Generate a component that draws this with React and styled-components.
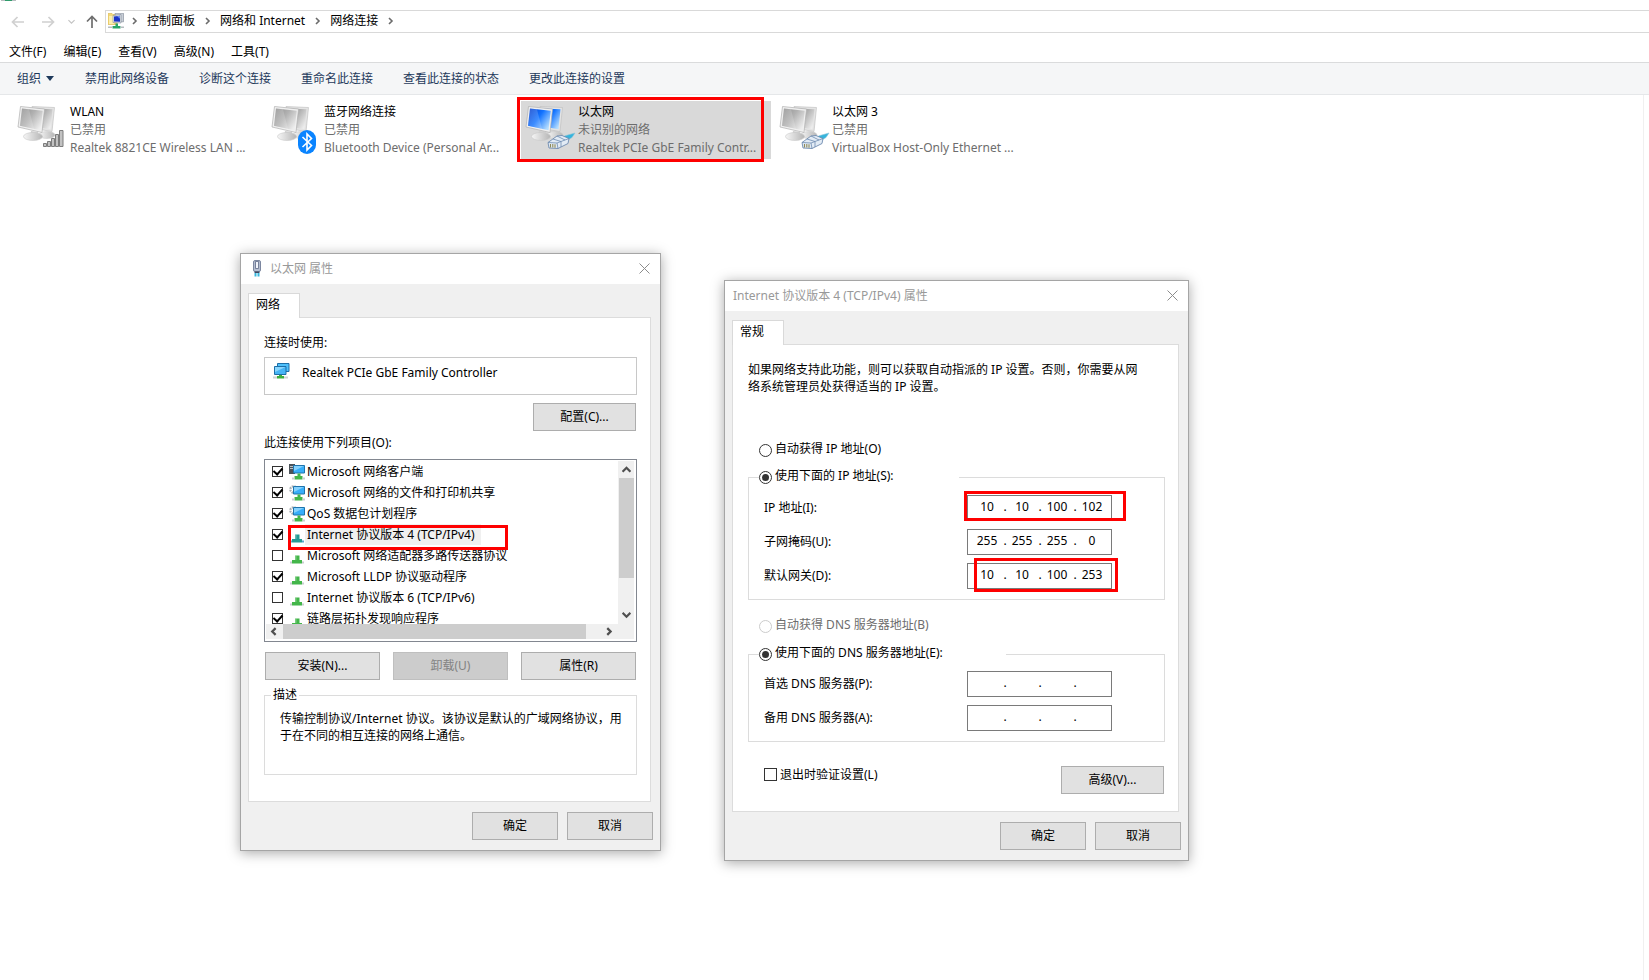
import React, { useState } from "react";
import styled, { createGlobalStyle, css } from "styled-components";

const GlobalStyle = createGlobalStyle`
  * {
    box-sizing: border-box;
  }

  body {
    margin: 0;
    background: #fff;
    color: #000;
    font-family: "Noto Sans", "Noto Sans CJK SC", sans-serif;
    font-size: 12px;
    line-height: 16px;
  }

  button, input {
    font: inherit;
    color: inherit;
  }
`;

const crumbs = ["控制面板", "网络和 Internet", "网络连接"];

const menus = ["文件(F)", "编辑(E)", "查看(V)", "高级(N)", "工具(T)"];

const commands = [
  "禁用此网络设备",
  "诊断这个连接",
  "重命名此连接",
  "查看此连接的状态",
  "更改此连接的设置",
];

const connections = [
  { name: "WLAN", status: "已禁用", device: "Realtek 8821CE Wireless LAN ...", badge: "signal" },
  { name: "蓝牙网络连接", status: "已禁用", device: "Bluetooth Device (Personal Ar...", badge: "bluetooth" },
  { name: "以太网", status: "未识别的网络", device: "Realtek PCIe GbE Family Contr...", badge: "cable", active: true },
  { name: "以太网 3", status: "已禁用", device: "VirtualBox Host-Only Ethernet ...", badge: "cable" },
];

const components = [
  { name: "Microsoft 网络客户端", icon: "client", on: true },
  { name: "Microsoft 网络的文件和打印机共享", icon: "service", on: true },
  { name: "QoS 数据包计划程序", icon: "service", on: true },
  { name: "Internet 协议版本 4 (TCP/IPv4)", icon: "protocol", on: true, selected: true },
  { name: "Microsoft 网络适配器多路传送器协议", icon: "protocol", on: false },
  { name: "Microsoft LLDP 协议驱动程序", icon: "protocol", on: true },
  { name: "Internet 协议版本 6 (TCP/IPv6)", icon: "protocol", on: false },
  { name: "链路层拓扑发现响应程序", icon: "protocol", on: true },
];

/* ---------- icons ---------- */

const Chevron = ({ dir = "right", size = 7, color = "#6b6b6b", width = 1.4 }) => {
  const paths = {
    right: "M2 1 L5 4 L2 7",
    left: "M5 1 L2 4 L5 7",
    up: "M0.5 6 L4 2.5 L7.5 6",
    down: "M0.5 2.5 L4 6 L7.5 2.5",
  };
  return (
    <svg width={size} height={size} viewBox="0 0 8 8" fill="none" stroke={color} strokeWidth={width}>
      <path d={paths[dir]} />
    </svg>
  );
};

const Arrow = ({ dir, color }) => {
  const turn = { left: 0, up: 90, right: 180 }[dir];
  return (
    <svg width="14" height="14" viewBox="0 0 14 14" fill="none" stroke={color} strokeWidth="1.7">
      <path d="M13 7H2M6.5 2L1.5 7l5 5" transform={`rotate(${turn} 7 7)`} />
    </svg>
  );
};

const FolderIcon = () => (
  <svg width="16" height="16" viewBox="0 0 16 16">
    <path d="M0 0.5h4l1 1h4v10H0z" fill="#f2d87a" stroke="#d9b64a" strokeWidth="0.6" />
    <path d="M1 3h5v8H1z" fill="#fbeeb0" />
    <path d="M7 0.3h8.500v8.500H8z" fill="#c9cfd8" stroke="#7d8794" strokeWidth="0.6" />
    <path d="M5 2.500l8-1v8.500l-8-0.5z" fill="#e2e6ec" stroke="#7d8794" strokeWidth="0.6" />
    <path d="M6 3.500l6-0.8v6.100l-6-0.4z" fill="#1b34c9" />
    <path d="M9 3.200l3-0.4v3z" fill="#6c8df2" />
    <path d="M7.500 10.500h2.500v2.500h2.500v2.500H4.500v-2.500h3z" fill="#27a567" />
    <path d="M0 13.500h4.500v1.500H0zM12.500 13.500h3.500v1.500h-3.500z" fill="#b5bcc0" />
  </svg>
);

const badges = {
  signal: (
    <g fill="#c2c2c2" stroke="#7d7d7d" strokeWidth="1">
      <path d="M27.500 38.500h3v3h-3zM31.500 36.500h3v5h-3zM35.500 33.500h3v8h-3zM39.500 29.500h3v12h-3zM43.500 25.500h3.500v16h-3.500z" />
    </g>
  ),
  bluetooth: (
    <g>
      <rect x="28" y="25" width="18" height="24" rx="9" fill="#0a84ff" />
      <path d="M32.500 32l9 8.500-4.500 4.500V29l4.500 4.500-9 8.500" fill="none" stroke="#fff" strokeWidth="1.6" />
    </g>
  ),
  cable: (
    <g strokeLinejoin="round">
      <path d="M36 33l6-2.500 9-2.500-3 4.500-5 3z" fill="#35b4dc" stroke="#8cc4d8" strokeWidth="0.6" />
      <path d="M24 37.500l9-6.500 5-0.500 7 3-1 5-10 5-9-0.500z" fill="#e2ebf5" stroke="#6f8bb0" strokeWidth="0.9" />
      <path d="M24 37.500l9 0.500 12-4.500M33 38l1 5.500M29 34l8 2.500M33 31l8 4M37 36.500v5.500" fill="none" stroke="#6f8bb0" strokeWidth="0.8" />
      <path d="M26.500 39v3.500M28.800 39v3.500M31 39.200v3.500" stroke="#8f8a58" strokeWidth="1.1" />
    </g>
  ),
};

const ConnectionIcon = ({ active, badge }) => {
  const [dark, mid, light] = active ? ["#0037c8", "#1273ff", "#b4ddff"] : ["#8a8a8a", "#b2b2b2", "#ededed"];
  const id = `screen-${active ? "blue" : "gray"}-${badge}`;
  return (
    <svg width="52" height="52" viewBox="0 0 52 52">
      <defs>
        <linearGradient id={id} x1="0" y1="0" x2="1" y2="0.7">
          <stop offset="0" stopColor={dark} />
          <stop offset="0.5" stopColor={mid} />
          <stop offset="1" stopColor={light} />
        </linearGradient>
        <linearGradient id={`${id}-base`} x1="0" y1="0" x2="1" y2="0">
          <stop offset="0" stopColor="#f6f6f6" />
          <stop offset="1" stopColor="#b5b5b5" />
        </linearGradient>
      </defs>
      <ellipse cx="31" cy="30" rx="8" ry="3.500" fill={`url(#${id}-base)`} stroke="#ccc" strokeWidth="0.6" />
      <path d="M16 1.500l22.500 1-2.500 24-18-3z" fill="#e4e4e4" stroke="#bcbcbc" strokeWidth="0.6" />
      <path d="M18 3.500l18.500 0.800-2 20-14.500-2.500z" fill={`url(#${id})`} />
      <path d="M15 26l-1 6 9 0-1-5z" fill="#cfcfcf" />
      <ellipse cx="17" cy="31.500" rx="9.500" ry="4" fill={`url(#${id}-base)`} stroke="#cacaca" strokeWidth="0.6" />
      <path d="M4.500 1.500l24 2.500-2.500 23.500-24-5.500z" fill="#f0f0f0" stroke="#b0b0b0" strokeWidth="0.7" />
      <path d="M6 3.500l20.800 2.200-2.300 19.600-20.500-4.600z" fill={`url(#${id})`} />
      <path d="M6 3.500l7 0.700 5 19.600-14-3.200z" fill="#fff" opacity="0.18" />
      {badges[badge]}
    </svg>
  );
};

const PlugIcon = () => (
  <svg width="10" height="17" viewBox="0 0 10 17">
    <rect x="1.500" y="0.500" width="7" height="11" rx="1.500" fill="#b4bdd0" stroke="#7c87a0" />
    <path d="M3.500 1.500h3v7h-3z" fill="#f1f4fa" stroke="#5e6a86" strokeWidth="0.8" />
    <path d="M2.500 11.500h5v1.500h-5z" fill="#3c4660" />
    <path d="M2.500 13h2v3.500h-2zM5.500 13h2v3.500h-2z" fill="#38b6dc" />
  </svg>
);

const AdapterIcon = () => (
  <svg width="17" height="16" viewBox="0 0 17 16">
    <path d="M4.500 0.500h11.500v8H4.500z" fill="#4ec0fb" stroke="#1d6fa8" />
    <path d="M1.500 3.500h11.500v8H1.500z" fill="#46b4f6" stroke="#1d6fa8" />
    <path d="M2 4h10.500L2 9z" fill="#8ad6fd" />
    <path d="M6 12h3v1h2v2.500H4V13h2z" fill="#3dae3f" />
    <path d="M0 13.500h4v2H0zM11 13.500h4v2h-4z" fill="#cfd2d4" />
  </svg>
);

const ComponentIcon = ({ kind, selected }) => {
  const green = selected ? "#249a94" : "#43b64a";
  if (kind === "protocol") {
    return (
      <svg width="16" height="16" viewBox="0 0 16 16">
        <path d="M6 7.500h4.500V12H13v3.500H3V12h3z" fill={green} />
        <path d="M1 13.500h2v2H1zM13 13.500h2v2h-2z" fill={selected ? "#5aa5cf" : "#c9cdd0"} />
        <path d="M6 7.500h1.500V12H6z" fill="#fff" opacity="0.3" />
      </svg>
    );
  }
  return (
    <svg width="16" height="16" viewBox="0 0 16 16">
      {kind === "client" ? (
        <g>
          <path d="M0 0h6v10H0z" fill="#4b5258" />
          <path d="M1 2h3v1H1zM1 4h3v1H1z" fill="#b8c0c6" />
        </g>
      ) : (
        <circle cx="4.500" cy="4.500" r="3.200" fill="none" stroke="#a6adb2" strokeWidth="2.200" strokeDasharray="1.700 0.900" />
      )}
      <path d="M4.500 1.500h11v7.500h-11z" fill="#37aefa" stroke="#1f74ad" />
      <path d="M5 2h10L5 7z" fill="#86d2fd" />
      <path d="M8.500 9.500h3V12h2v3.500h-8V12h3z" fill="#43b64a" />
      <path d="M3 13.500h2.500v2H3zM13.500 13.500H16v2h-2.500z" fill="#c9cdd0" />
    </svg>
  );
};

const CloseIcon = () => (
  <svg width="11" height="11" viewBox="0 0 11 11" stroke="#8c8c8c" strokeWidth="1">
    <path d="M0.500 0.500l10 10M10.500 0.500l-10 10" />
  </svg>
);

/* ---------- parts ---------- */

const Explorer = ({ children }) => (
  <Page>
    <AddressRow>
      <NavButtons>
        <NavButton aria-label="后退" disabled><Arrow dir="left" color="#d0d0d0" /></NavButton>
        <NavButton aria-label="前进" disabled><Arrow dir="right" color="#d0d0d0" /></NavButton>
        <NavButton aria-label="最近" $small disabled><Chevron dir="down" color="#c4c4c4" /></NavButton>
        <NavButton aria-label="向上"><Arrow dir="up" color="#6e6e6e" /></NavButton>
      </NavButtons>
      <AddressBar aria-label="地址">
        <FolderIcon />
        {crumbs.map((crumb) => (
          <Crumb key={crumb}>
            <Chevron size={8} width={1.6} />
            <a href="#">{crumb}</a>
          </Crumb>
        ))}
        <Crumb><Chevron size={8} width={1.6} /></Crumb>
      </AddressBar>
    </AddressRow>
    <MenuBar>
      {menus.map((menu) => <MenuButton key={menu}>{menu}</MenuButton>)}
    </MenuBar>
    <CommandBar>
      <Command>组织 <Caret /></Command>
      {commands.map((command) => <Command key={command}>{command}</Command>)}
    </CommandBar>
    <Desktop>
      <Connections>
        {connections.map(({ name, status, device, badge, active }) => (
          <Connection key={name} $active={active}>
            <ConnectionIcon active={active} badge={badge} />
            <ConnectionText>
              <strong>{name}</strong>
              <span>{status}</span>
              <span>{device}</span>
            </ConnectionText>
            {active && <TileMark />}
          </Connection>
        ))}
      </Connections>
    </Desktop>
    {children}
  </Page>
);

const Dialog = ({ place, title, icon, tab, children }) => (
  <Window $place={place} role="dialog" aria-label={title}>
    <TitleBar $icon={icon}>
      {icon}
      <h2>{title}</h2>
      <CloseButton aria-label="关闭"><CloseIcon /></CloseButton>
    </TitleBar>
    <WindowBody>
      <Tab>{tab}</Tab>
      <Panel>{children}</Panel>
      <Footer>
        <Button $width={86}>确定</Button>
        <Button $width={86}>取消</Button>
      </Footer>
    </WindowBody>
  </Window>
);

const AdapterDialog = () => {
  const [items, setItems] = useState(components);

  const toggle = (index) =>
    setItems(items.map((item, i) => (i === index ? { ...item, on: !item.on } : item)));

  return (
    <Dialog place={{ left: 240, top: 253, width: 421 }} title="以太网 属性" icon={<PlugIcon />} tab="网络">
      <AdapterLabel>连接时使用:</AdapterLabel>
      <AdapterBox>
        <AdapterIcon />
        Realtek PCIe GbE Family Controller
      </AdapterBox>
      <ConfigureRow>
        <Button $width={103}>配置(C)...</Button>
      </ConfigureRow>
      <div>此连接使用下列项目(O):</div>
      <ListBox>
        <ListRows>
          {items.map((item, index) => (
            <ListRow key={item.name}>
              <CheckBox checked={item.on} onChange={() => toggle(index)} />
              <ComponentIcon kind={item.icon} selected={item.selected} />
              <ListName $selected={item.selected}>{item.name}</ListName>
              {item.selected && <RowMark />}
            </ListRow>
          ))}
        </ListRows>
        <VerticalBar>
          <Chevron dir="up" size={9} color="#505050" width={2} />
          <VerticalThumb />
          <Chevron dir="down" size={9} color="#505050" width={2} />
        </VerticalBar>
        <HorizontalBar>
          <Chevron dir="left" size={9} color="#505050" width={2} />
          <HorizontalThumb />
          <Chevron dir="right" size={9} color="#505050" width={2} />
        </HorizontalBar>
      </ListBox>
      <ActionRow>
        <Button>安装(N)...</Button>
        <Button disabled>卸载(U)</Button>
        <Button>属性(R)</Button>
      </ActionRow>
      <Description>
        <legend>描述</legend>
        传输控制协议/Internet 协议。该协议是默认的广域网络协议，用于在不同的相互连接的网络上通信。
      </Description>
    </Dialog>
  );
};

const AddressField = ({ label, value = ["", "", "", ""], mark }) => (
  <FieldRow>
    <span>{label}</span>
    <AddressBox role="group" aria-label={label}>
      {value.map((part, i) => (
        <React.Fragment key={i}>
          {i > 0 && <i>.</i>}
          <input defaultValue={part} maxLength={3} aria-label={`${label} ${i + 1}`} />
        </React.Fragment>
      ))}
      {mark && <FieldMark $mark={mark} />}
    </AddressBox>
  </FieldRow>
);

const ProtocolDialog = () => (
  <Dialog place={{ left: 724, top: 280, width: 465 }} title="Internet 协议版本 4 (TCP/IPv4) 属性" tab="常规">
    <Intro>
      如果网络支持此功能，则可以获取自动指派的 IP 设置。否则，你需要从网络系统管理员处获得适当的 IP 设置。
    </Intro>
    <Option>
      <Radio name="ip" />自动获得 IP 地址(O)
    </Option>
    <Group $gap={9} $top={8} $legend={200}>
      <legend>
        <Option $inGroup><Radio name="ip" defaultChecked />使用下面的 IP 地址(S):</Option>
      </legend>
      <AddressField label="IP 地址(I):" value={["10", "10", "100", "102"]} mark={{ left: -4, top: -5, width: 162, height: 30 }} />
      <AddressField label="子网掩码(U):" value={["255", "255", "255", "0"]} />
      <AddressField label="默认网关(D):" value={["10", "10", "100", "253"]} mark={{ left: 6, top: -6, width: 144, height: 34 }} />
    </Group>
    <DnsOption $disabled>
      <Radio name="dns" disabled />自动获得 DNS 服务器地址(B)
    </DnsOption>
    <Group $gap={10} $top={7} $legend={247}>
      <legend>
        <Option $inGroup><Radio name="dns" defaultChecked />使用下面的 DNS 服务器地址(E):</Option>
      </legend>
      <AddressField label="首选 DNS 服务器(P):" />
      <AddressField label="备用 DNS 服务器(A):" />
    </Group>
    <AdvancedRow>
      <ValidateLabel>
        <CheckBox $large />退出时验证设置(L)
      </ValidateLabel>
      <Button $width={103}>高级(V)...</Button>
    </AdvancedRow>
  </Dialog>
);

const App = () => (
  <>
    <GlobalStyle />
    <Explorer>
      <AdapterDialog />
      <ProtocolDialog />
    </Explorer>
  </>
);

export default App;

// Styles
const Page = styled.main`
  position: relative;
  display: flex;
  flex-direction: column;
  min-height: 100vh;
  overflow: hidden;
`;

const AddressRow = styled.div`
  display: flex;
  padding-top: 10px;

  &::before {
    content: "";
    position: absolute;
    top: 0;
    left: 1px;
    width: 15px;
    height: 1px;
    background: linear-gradient(90deg, #b9bec0 4px, #2e9b6b 4px, #2e9b6b 11px, #b9bec0 11px);
  }
`;

const NavButtons = styled.div`
  display: flex;
  align-items: center;
  width: 105px;
  padding-left: 11px;
  gap: 16px;
`;

const NavButton = styled.button`
  display: flex;
  padding: 0;
  border: none;
  background: none;

  ${({ $small }) => $small && css`
    margin: 0 -6px 0 -3px;
  `}
`;

const AddressBar = styled.nav`
  display: flex;
  flex: 1;
  align-items: center;
  height: 23px;
  padding: 0 0 1px 2px;
  border: 1px solid #d9d9d9;
  border-right: none;
`;

const Crumb = styled.span`
  display: flex;
  align-items: center;
  gap: 8px;
  margin-left: 7px;

  a {
    padding-right: 2px;
    color: #000;
    text-decoration: none;
  }
`;

const MenuBar = styled.div`
  display: flex;
  gap: 17px;
  padding: 11px 9px 2px;
`;

const MenuButton = styled.button`
  padding: 0;
  border: none;
  background: none;
`;

const CommandBar = styled.div`
  display: flex;
  align-items: center;
  gap: 30px;
  height: 33px;
  padding-left: 17px;
  background: #f5f6f7;
  border-top: 1px solid #dadbdc;
  border-bottom: 1px solid #e5e7e9;
`;

const Command = styled.button`
  display: flex;
  align-items: center;
  gap: 5px;
  padding: 0;
  border: none;
  background: none;
  color: #1e395b;
`;

const Caret = styled.span`
  margin-right: 1px;
  border: 4px solid transparent;
  border-top: 5px solid #1e395b;
  border-bottom: none;
`;

const Desktop = styled.section`
  flex: 1;
  margin-right: 5px;
  padding: 6px 0 0 13px;
  border-right: 1px solid #f0f0f0;
`;

const Connections = styled.ul`
  display: flex;
  gap: 4px;
  margin: 0;
  padding: 0;
  list-style: none;
`;

const Connection = styled.li`
  position: relative;
  display: flex;
  width: 250px;
  height: 58px;
  padding: 2px 0 0 3px;
  background: ${({ $active }) => ($active ? "#d9d9d9" : "transparent")};

  > svg {
    flex: none;
    margin-top: 2px;
  }
`;

const ConnectionText = styled.div`
  display: flex;
  flex-direction: column;
  margin-left: 2px;
  color: #6d6d6d;
  line-height: 18px;
  white-space: nowrap;

  strong {
    color: #000;
    font-weight: normal;
  }
`;

// red rectangles drawn over the controls
const Mark = styled.span`
  position: absolute;
  z-index: 1;
  border: 3px solid #fe0000;
  pointer-events: none;
`;

const TileMark = styled(Mark)`
  inset: -4px 7px -3px -4px;
`;

const RowMark = styled(Mark)`
  left: 22px;
  top: 1px;
  width: 220px;
  height: 25px;
`;

const FieldMark = styled(Mark)`
  left: ${({ $mark }) => $mark.left}px;
  top: ${({ $mark }) => $mark.top}px;
  width: ${({ $mark }) => $mark.width}px;
  height: ${({ $mark }) => $mark.height}px;
`;

const Window = styled.section`
  position: absolute;
  left: ${({ $place }) => $place.left}px;
  top: ${({ $place }) => $place.top}px;
  width: ${({ $place }) => $place.width}px;
  border: 1px solid #a5a5a5;
  background: #f0f0f0;
  box-shadow: 0 2px 12px rgba(0, 0, 0, 0.34);
`;

const TitleBar = styled.header`
  display: flex;
  align-items: center;
  height: 30px;
  padding: 0 10px 1px ${({ $icon }) => ($icon ? 11 : 8)}px;
  background: #fff;
  color: #999;

  h2 {
    flex: 1;
    margin: 1px 0 0 ${({ $icon }) => ($icon ? 8 : 0)}px;
    font-size: 12px;
    font-weight: normal;
  }
`;

const CloseButton = styled.button`
  display: flex;
  padding: 0;
  border: none;
  background: none;
`;

const WindowBody = styled.div`
  display: flex;
  flex-direction: column;
  align-items: flex-start;
  padding: 9px 7px 10px;
`;

const Tab = styled.button`
  position: relative;
  width: 52px;
  height: 25px;
  margin-bottom: -1px;
  padding: 0 0 2px 7px;
  border: 1px solid #d9d9d9;
  border-bottom: none;
  background: #fff;
  text-align: left;
`;

const Panel = styled.div`
  align-self: stretch;
  margin-right: 2px;
  padding: 16px 13px 26px 15px;
  border: 1px solid #dcdcdc;
  background: #fff;
`;

const Footer = styled.footer`
  display: flex;
  align-self: flex-end;
  gap: 9px;
  margin-top: 10px;
`;

const Button = styled.button`
  width: ${({ $width }) => ($width ? `${$width}px` : "auto")};
  height: 28px;
  padding: 0;
  border: 1px solid #adadad;
  background: #e1e1e1;
  text-align: center;

  &:disabled {
    border-color: #bfbfbf;
    background: #ccc;
    color: #838383;
  }
`;

const AdapterLabel = styled.div`
  padding-top: 1px;
  margin-bottom: 6px;
`;

const AdapterBox = styled.div`
  display: flex;
  gap: 12px;
  height: 38px;
  padding: 5px 8px;
  border: 1px solid #c8c8c8;
  line-height: 20px;
`;

const ConfigureRow = styled.div`
  display: flex;
  justify-content: flex-end;
  padding: 8px 1px 4px;
`;

const ListBox = styled.div`
  display: grid;
  grid-template: 163px 15px / 1fr 16px;
  height: 183px;
  margin-top: 8px;
  padding: 1px 2px 1px 1px;
  border: 1px solid #828790;
`;

const ListRows = styled.div`
  overflow: hidden;
`;

const ListRow = styled.label`
  position: relative;
  display: flex;
  align-items: center;
  height: 21px;
  padding-left: 6px;

  > svg {
    margin-left: 6px;
  }
`;

const ListName = styled.span`
  height: 21px;
  padding: 3px 6px 2px 2px;
  background: ${({ $selected }) => ($selected ? "#f0f0f0" : "transparent")};
`;

const CheckBox = styled.input.attrs({ type: "checkbox" })`
  display: grid;
  flex: none;
  place-content: center;
  width: ${({ $large }) => ($large ? 13 : 11)}px;
  height: ${({ $large }) => ($large ? 13 : 11)}px;
  margin: 0 0 1px;
  border: 1px solid #333;
  background: #fff;
  appearance: none;

  &:checked::after {
    content: "";
    width: 4px;
    height: 7px;
    margin-bottom: 2px;
    border: solid #000;
    border-width: 0 2px 2px 0;
    transform: rotate(42deg);
  }
`;

const VerticalBar = styled.div`
  display: flex;
  flex-direction: column;
  align-items: center;
  padding: 4px 0 5px;
  background: #f0f0f0;

  svg:last-child {
    margin-top: auto;
  }
`;

const VerticalThumb = styled.div`
  width: 15px;
  height: 100px;
  margin-top: 4px;
  background: #cdcdcd;
`;

const HorizontalBar = styled.div`
  grid-column: 1 / -1;
  display: flex;
  align-items: center;
  padding: 0 20px 0 4px;
  background: #f0f0f0;

  svg {
    flex: none;
  }
`;

const HorizontalThumb = styled.div`
  flex: 1;
  height: 15px;
  margin: 0 19px 0 4px;
  background: #cdcdcd;
`;

const ActionRow = styled.div`
  display: grid;
  grid-template-columns: repeat(3, 1fr);
  gap: 13px;
  margin: 10px 1px 7px;
`;

const Description = styled.fieldset`
  height: 88px;
  margin: 0;
  padding: 7px 12px 0 15px;
  border: 1px solid #dcdcdc;
  line-height: 17px;

  legend {
    margin-left: -9px;
    padding: 0 2px;
    line-height: 16px;
  }
`;

const Intro = styled.p`
  margin: 0 20px 45px 0;
  line-height: 17px;
`;

const Option = styled.label`
  display: flex;
  align-items: center;
  gap: 3px;
  height: 18px;
  margin-left: ${({ $inGroup }) => ($inGroup ? 0 : 11)}px;
  color: ${({ $disabled }) => ($disabled ? "#6d6d6d" : "#000")};
`;

const DnsOption = styled(Option)`
  margin-top: 16px;
`;

const Radio = styled.input.attrs({ type: "radio" })`
  display: grid;
  place-content: center;
  width: 13px;
  height: 13px;
  margin: 2px 0 0;
  border: 1px solid #333;
  border-radius: 50%;
  background: #fff;
  appearance: none;

  &:checked::after {
    content: "";
    width: 7px;
    height: 7px;
    border-radius: 50%;
    background: #333;
  }

  &:disabled {
    border-color: #ccc;
  }
`;

const Group = styled.fieldset`
  display: flex;
  flex-direction: column;
  gap: 8px;
  margin: ${({ $gap }) => $gap}px 0 0;
  padding: ${({ $top }) => $top}px 15px 10px;
  border: 1px solid #dcdcdc;

  legend {
    width: ${({ $legend }) => $legend}px;
    height: 20px;
    margin-left: -5px;
    padding: 0;
  }
`;

const FieldRow = styled.div`
  display: flex;
  align-items: center;

  > span {
    width: 203px;
  }
`;

const AddressBox = styled.div`
  position: relative;
  display: flex;
  align-items: center;
  width: 145px;
  height: 26px;
  padding: 0 0 2px 6px;
  border: 1px solid #7a7a7a;

  input {
    width: 26px;
    padding: 0;
    border: none;
    outline: none;
    background: none;
    text-align: center;
  }

  i {
    width: 9px;
    padding-left: 1px;
    font-style: normal;
    text-align: center;
  }
`;

const AdvancedRow = styled.div`
  display: flex;
  align-items: flex-start;
  justify-content: space-between;
  margin-top: 24px;
  padding: 0 1px 0 16px;
  margin-bottom: -9px;
`;

const ValidateLabel = styled.label`
  display: flex;
  align-items: center;
  gap: 3px;
  height: 18px;
`;
